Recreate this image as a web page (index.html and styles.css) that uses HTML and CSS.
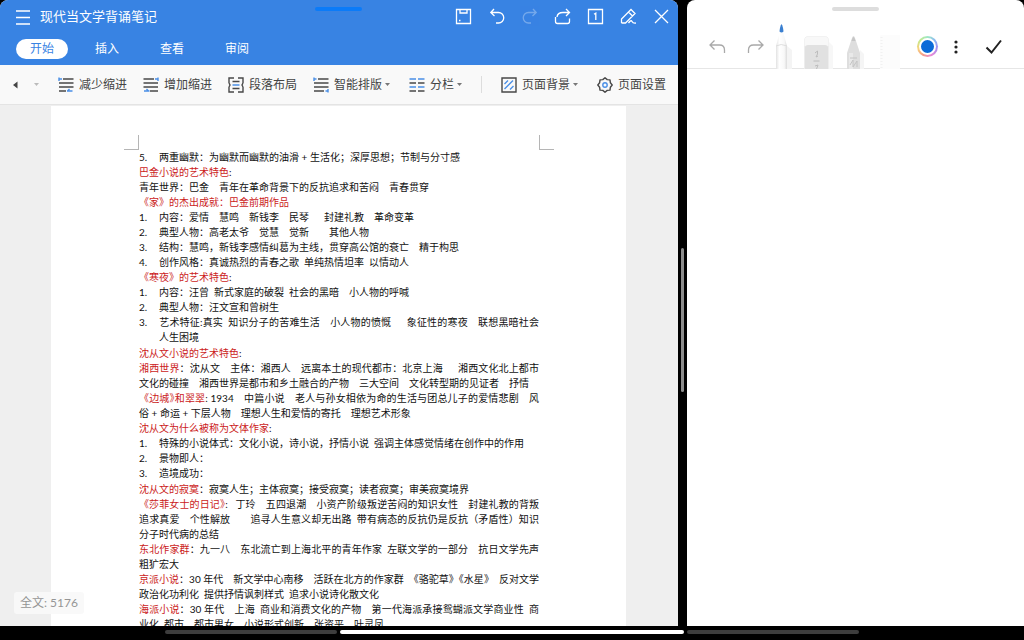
FILE: index.html
```html
<!DOCTYPE html>
<html lang="zh-CN">
<head>
<meta charset="utf-8">
<title>现代当文学背诵笔记</title>
<link rel="stylesheet" href="styles.css">
</head>
<body>
<div class="split">
  <main class="pane editor">
    <span class="grip grip-blue"></span>
    <header class="appbar">
      <div class="titlebar">
        <button class="icon-btn" aria-label="菜单"><svg width="16" height="16" viewBox="0 0 16 16"><path d="M1 2H15M1 8.500H15M1 15H15"/></svg></button>
        <h1 class="title">现代当文学背诵笔记</h1>
        <div class="actions">
          <button class="icon-btn" aria-label="保存"><svg width="17" height="17" viewBox="0 0 17 17"><path d="M1.500 1.500H15.500V15.500H1.500ZM5 1.500V5H12V1.500M4 12.500H5.500"/></svg></button>
          <button class="icon-btn" aria-label="撤销"><svg width="17" height="17" viewBox="0 0 17 17"><path d="M6 1L2.800 4.500L6.500 8M3 4.500H10.500A5 5 0 0 1 10.500 15H8"/></svg></button>
          <button class="icon-btn" aria-label="重做" disabled><svg width="17" height="17" viewBox="0 0 17 17"><path d="M12 1L15.200 4.500L11.500 8M15 4.500H7.500A5 5 0 0 0 7.500 15H10"/></svg></button>
          <button class="icon-btn" aria-label="分享"><svg width="17" height="17" viewBox="0 0 17 17"><path d="M12 1L15.500 4.500L12 8M15.500 4.500H9Q3.500 4.500 3 9M1.500 9V13.500Q1.500 15.500 3.500 15.500H13.500Q15.500 15.500 15.500 13.500V10.500"/></svg></button>
          <button class="icon-btn" aria-label="窗口"><svg width="17" height="17" viewBox="0 0 17 17"><path d="M1.500 1.500H15.500V15.500H1.500ZM7 6.300L8.800 5.200V12"/></svg></button>
          <button class="icon-btn" aria-label="编辑"><svg width="17" height="17" viewBox="0 0 17 17"><path d="M1.500 15V11L11 1.500L15 5.500L5.500 15H1.500M8.500 4L12.500 8M8.500 15Q11 11.500 12 13.500T16 15"/></svg></button>
          <button class="icon-btn" aria-label="关闭"><svg width="17" height="17" viewBox="0 0 17 17"><path d="M2 2L15 15M15 2L2 15"/></svg></button>
        </div>
      </div>
      <nav class="tabs">
        <button class="tab active">开始</button>
        <button class="tab">插入</button>
        <button class="tab">查看</button>
        <button class="tab">审阅</button>
      </nav>
    </header>
    <div class="ribbon">
      <div class="ribbon-start">
        <button class="scroll-btn" aria-label="向左"><svg width="6" height="8" viewBox="0 0 6 8"><path d="M5.500 .5V7.500L1 4Z" fill="#444"/></svg></button>
        <button class="scroll-btn" aria-label="更多"><svg width="5" height="3" viewBox="0 0 5 3"><path d="M0 0H5L2.500 3Z" fill="#bbb"/></svg></button>
      </div>
      <button class="tool"><svg class="tool-icon" width="16" height="16" viewBox="0 0 16 16"><path d="M5 2H15.500M1 6H15.500M1 10H15.500M1 14H8"/><path class="accent" d="M1 .5V4M1 2H4M9 14H14.500M11.500 12L9.500 14"/></svg>减少缩进</button>
      <button class="tool"><svg class="tool-icon" width="16" height="16" viewBox="0 0 16 16"><path d="M.5 2H11M.5 6H15M.5 10H15M7 14H15"/><path class="accent" d="M15 .5V4M12 2H15M1 14H6.500M3.500 12L5.500 14"/></svg>增加缩进</button>
      <button class="tool"><svg class="tool-icon" width="16" height="16" viewBox="0 0 16 16"><path d="M6 1H1V6M10 1H15V6M1 10V15H6M15 10V15H10M4.500 4.500H11.500M4.500 11.500H11.500M1 6L2 8L1 10M15 6L14 8L15 10"/><path class="accent" d="M4.500 8H11.500"/></svg>段落布局</button>
      <button class="tool menu"><svg class="tool-icon" width="16" height="16" viewBox="0 0 16 16"><path d="M5 2H15.500M1 6H15.500M1 10H15.500M1 14H11"/><path class="accent" d="M1 .5V4M1 2H3.500M15 12V15.500M12.500 14H15"/></svg>智能排版<svg class="caret" width="5" height="3" viewBox="0 0 5 3"><path d="M0 0H5L2.500 3Z"/></svg></button>
      <button class="tool menu"><svg class="tool-icon" width="16" height="16" viewBox="0 0 16 16"><path d="M.5 6H7M9 6H15.500M.5 14H7M9 14H15.500"/><path class="accent" d="M.5 2H7M9 2H15.500M.5 10H7M9 10H15.500"/></svg>分栏<svg class="caret" width="5" height="3" viewBox="0 0 5 3"><path d="M0 0H5L2.500 3Z"/></svg></button>
      <span class="divider"></span>
      <button class="tool menu"><svg class="tool-icon" width="16" height="16" viewBox="0 0 16 16"><path d="M1 1H15V15H1Z"/><path class="accent" d="M3.500 7L7 3.500M3.500 12L12 3.500M9 12.500L12.500 9"/></svg>页面背景<svg class="caret" width="5" height="3" viewBox="0 0 5 3"><path d="M0 0H5L2.500 3Z"/></svg></button>
      <button class="tool"><svg class="tool-icon" width="16" height="16" viewBox="0 0 16 16"><path d="M8 .8L10.200 2.600L13 2.900L13.400 5.800L15.200 8L13.400 10.200L13 13.100L10.200 13.400L8 15.200L5.800 13.400L3 13.100L2.600 10.200L.8 8L2.600 5.800L3 2.900L5.800 2.600Z" stroke-linejoin="round"/><circle class="accent" cx="8" cy="8" r="2.200"/></svg>页面设置</button>
    </div>
    <div class="canvas">
      <article class="page">
        <span class="crop crop-left"></span><span class="crop crop-right"></span>
        <section class="chapter">
          <ol class="list"><li><span class="num">5.</span>两重幽默：为幽默而幽默的油滑 + 生活化；深厚思想；节制与分寸感</li></ol>
          <p><b>巴金小说的艺术特色</b>:</p>
          <p>青年世界：巴金　青年在革命背景下的反抗追求和苦闷　青春贯穿</p>
          <p><b>《家》的杰出成就：巴金前期作品</b></p>
          <ol class="list">
            <li><span class="num">1.</span>内容：爱情　慧鸣　新钱李　民琴&ensp;　封建礼教　革命变革</li>
            <li><span class="num">2.</span>典型人物：高老太爷　觉慧　觉新　　其他人物</li>
            <li><span class="num">3.</span>结构：慧鸣，新钱李感情纠葛为主线，贯穿高公馆的衰亡　精于构思</li>
            <li><span class="num">4.</span>创作风格：真诚热烈的青春之歌&ensp;单纯热情坦率&ensp;以情动人</li>
          </ol>
          <p><b>《寒夜》的艺术特色</b>:</p>
          <ol class="list">
            <li><span class="num">1.</span>内容：汪曾&ensp;新式家庭的破裂&ensp;社会的黑暗　小人物的呼喊</li>
            <li><span class="num">2.</span>典型人物：汪文宣和曾树生</li>
            <li><span class="line"><span class="num">3.</span>艺术特征:真实&ensp;知识分子的苦难生活　小人物的愤慨&ensp;　象征性的寒夜　联想黑暗社会</span>人生困境</li>
          </ol>
        </section>
        <section class="chapter">
          <p><b>沈从文小说的艺术特色</b>:</p>
          <p><span class="line"><b>湘西世界</b>：沈从文　主体：湘西人　远离本土的现代都市：北京上海&ensp;　湘西文化北上都市</span>文化的碰撞　湘西世界是都市和乡土融合的产物　三大空间　文化转型期的见证者　抒情</p>
          <p><span class="line"><b>《边城<span class="half">》</span>和翠翠</b>: 1934　中篇小说　老人与孙女相依为命的生活与团总儿子的爱情悲剧　风</span>俗 + 命运 + 下层人物　理想人生和爱情的寄托　理想艺术形象</p>
          <p><b>沈从文为什么被称为文体作家</b>:</p>
          <ol class="list">
            <li><span class="num">1.</span>特殊的小说体式：文化小说，诗小说，抒情小说&ensp;强调主体感觉情绪在创作中的作用</li>
            <li><span class="num">2.</span>景物即人：</li>
            <li><span class="num">3.</span>造境成功：</li>
          </ol>
        </section>
        <section class="chapter">
          <p><b>沈从文的寂寞</b>：寂寞人生；主体寂寞；接受寂寞；读者寂寞；审美寂寞境界</p>
          <p><span class="line"><b>《莎菲女士的日记<span class="half">》</span></b>: &ensp;丁玲　五四退潮　小资产阶级叛逆苦闷的知识女性　封建礼教的背叛</span><span class="line">追求真爱　个性解放　　追寻人生意义却无出路&ensp;带有病态的反抗仍是反抗（矛盾性）知识</span>分子时代病的总结</p>
          <p><span class="line"><b>东北作家群</b>：九一八　东北流亡到上海北平的青年作家&ensp;左联文学的一部分　抗日文学先声</span>粗犷宏大</p>
          <p><span class="line"><b>京派小说</b>：30 年代　新文学中心南移　活跃在北方的作家群&ensp;《骆驼草》《水星》&ensp;反对文学</span>政治化功利化&ensp;提供抒情讽刺样式&ensp;追求小说诗化散文化</p>
          <p><span class="line"><b>海派小说</b>：30 年代　上海&ensp;商业和消费文化的产物　第一代海派承接鸳蝴派文学商业性&ensp;商</span>业化&ensp;都市　都市男女　小说形式创新　张资平　叶灵凤</p>
        </section>
      </article>
      <output class="count">全文: 5176</output>
    </div>
  </main>
  <div class="splitter"><span class="splitter-handle"></span></div>
  <aside class="pane notes">
    <span class="grip grip-gray"></span>
    <div class="pens">
      <div class="history">
        <button class="icon-btn" aria-label="撤销"><svg width="18" height="16" viewBox="0 0 18 16"><path d="M6.500 1.500L2 6L6.500 10.500M2 6H11.500Q16.500 6 16.500 11V14"/></svg></button>
        <button class="icon-btn" aria-label="重做"><svg width="18" height="16" viewBox="0 0 18 16"><path d="M11.500 1.500L16 6L11.500 10.500M16 6H6.500Q1.500 6 1.500 11V14"/></svg></button>
      </div>
      <div class="pen-set">
        <button class="pen" aria-label="铅笔"><svg width="20" height="45" viewBox="0 0 20 45"><defs><linearGradient id="body"><stop offset="0" stop-color="#e2e2e2"/><stop offset=".3" stop-color="#fff"/><stop offset=".75" stop-color="#f8f8f8"/><stop offset="1" stop-color="#dcdcdc"/></linearGradient></defs><path d="M11 22L16 26V45H11Z" fill="#f4f4f4"/><path d="M4 8H7L11 22V45H0V22Z" fill="url(#body)"/><path d="M0 22Q5 19 11 22" fill="none" stroke="#ddd"/><path d="M3.500 7.500Q4 2 5.500 0Q7 2 7.500 7.500Q5.500 9.500 3.500 7.500Z" fill="#3a7fd0"/></svg></button>
        <button class="pen" aria-label="橡皮"><svg width="30" height="45" viewBox="0 0 30 45"><path d="M25 18L29 22V45H25Z" fill="#f7f7f7"/><path d="M0 45V17Q0 12 5 12H20Q25 12 25 17V45Z" fill="#ededed"/><path d="M.5 22V17Q.5 12.500 5 12.500H20Q24.500 12.500 24.500 17V22Z" fill="#f8f8f8"/><path d="M1 45V24Q1 21 4 21H21Q24 21 24 24V45Z" fill="#e1e1e1"/><path d="M11 29L13.500 27V30L12 33L14 32M9.500 37H15.500M11 42L14 41L12.500 45" fill="none" stroke="#bcbcbc"/></svg></button>
        <button class="pen" aria-label="钢笔"><svg width="20" height="45" viewBox="0 0 20 45"><path d="M13 26L17 30V45H13Z" fill="#f5f5f5"/><path d="M0 45V29L5 14Q6.500 10 8 14L13 29V45Z" fill="#dedede"/><path d="M4.500 17Q6.500 9 8.500 17Z" fill="#c6c6c6"/><path d="M2 29H6V45H2Z" fill="#e9e9e9"/><path d="M3 34H10M3 41L6 36V43L10 37V43" fill="none" stroke="#c4c4c4"/></svg></button>
        <button class="pen" aria-label="尺子"><svg width="26" height="45" viewBox="0 0 26 45"><path d="M0 45V12Q0 11 1 11H20V45Z" fill="#fcfcfc"/><path d="M1.500 13V45" stroke="#f1f1f1" stroke-dasharray="1 2" stroke-width="2"/></svg></button>
      </div>
      <div class="options">
        <button class="color" aria-label="颜色"><span class="swatch"></span></button>
        <button class="icon-btn solid" aria-label="更多"><svg width="10" height="16" viewBox="0 0 10 16"><circle cx="5" cy="3" r="1.600"/><circle cx="5" cy="8" r="1.600"/><circle cx="5" cy="13" r="1.600"/></svg></button>
        <button class="icon-btn done" aria-label="完成"><svg width="18" height="16" viewBox="0 0 18 16"><path d="M1.500 8.500L6.500 13.500L16 1.500"/></svg></button>
      </div>
    </div>
  </aside>
</div>
<footer class="sysbar"><span class="bar"></span><span class="bar current"></span><span class="bar"></span></footer>
</body>
</html>
```
FILE: styles.css
```css
* { box-sizing: border-box; }

body {
  margin: 0;
  height: 100vh;
  display: flex;
  flex-direction: column;
  overflow: hidden;
  background: #000;
  font-family: Lato, "Noto Sans CJK SC", sans-serif;
}

button {
  border: 0;
  padding: 0;
  background: none;
  font: inherit;
  color: inherit;
}

svg { display: block; }

.split {
  flex: 1;
  min-height: 0;
  display: flex;
}

.pane {
  position: relative;
  min-width: 0;
  overflow: hidden;
  border-radius: 8px 8px 0 0;
  display: flex;
  flex-direction: column;
}

.editor { flex: 678 1 0; background: #efefef; }
.notes { flex: 337 1 0; background: #fff; }

.grip {
  position: absolute;
  top: 7px;
  left: 50%;
  width: 47px;
  height: 4px;
  margin-left: -24px;
  border-radius: 2px;
}
.grip-blue { background: #0b7bf8; }
.grip-gray { background: #ddd; }

.splitter {
  flex: none;
  width: 9px;
  display: flex;
  align-items: center;
  justify-content: center;
  padding-top: 14px;
}
.splitter-handle {
  width: 3px;
  height: 144px;
  border-radius: 2px;
  background: #8c8c8c;
}

/* App bar */
.appbar {
  height: 65px;
  background: #3883e3;
  color: #fff;
}
.titlebar {
  display: flex;
  align-items: center;
  height: 33px;
  padding: 0 8px 0 15px;
}
.title {
  flex: 1;
  margin: 0 0 2px 9px;
  font-size: 13px;
  line-height: 18px;
  font-weight: 400;
}
.actions { display: flex; gap: 16px; }

.icon-btn svg {
  fill: none;
  stroke: currentColor;
  stroke-width: 1.3;
}
.icon-btn:disabled { opacity: .3; }

.tabs {
  display: flex;
  gap: 13px;
  padding: 6px 16px 0;
}
.tab {
  width: 52px;
  height: 20px;
  border-radius: 10px;
  font-size: 12px;
  line-height: 20px;
}
.tab.active { background: #fff; color: #3883e3; }

/* Ribbon */
.ribbon {
  flex: none;
  display: flex;
  align-items: center;
  gap: 16px;
  height: 40px;
  overflow: hidden;
  background: #f9f9f9;
  border-bottom: 1px solid #e4e4e4;
  color: #444;
}
.ribbon-start {
  flex: none;
  display: flex;
  align-items: center;
  justify-content: space-between;
  width: 42px;
  padding: 0 3px 0 12px;
}
.tool {
  flex: none;
  display: flex;
  align-items: center;
  font-size: 12px;
  line-height: 18px;
}
.tool.menu { padding-right: 3px; }
.tool-icon {
  margin-right: 5px;
  fill: none;
  stroke: #484848;
  stroke-width: 1.4;
}
.tool-icon .accent { stroke: #4a8fe6; }
.caret { margin-left: 3px; fill: #777; }
.divider {
  width: 1px;
  height: 17px;
  margin-right: 3px;
  background: #ddd;
}

/* Document */
.canvas {
  position: relative;
  flex: 1;
  min-height: 0;
  overflow: hidden;
  padding: 1px 52px 0 51px;
}
.page {
  position: relative;
  min-height: 100%;
  padding: 44px 87px 0 88px;
  background: #fff;
  color: #111;
  font-size: 10px;
  line-height: 15px;
}
.crop {
  position: absolute;
  top: 29px;
  width: 15px;
  height: 15px;
  border-bottom: 1px solid #b5b5b5;
}
.crop-left { left: 73px; border-right: 1px solid #b5b5b5; }
.crop-right { right: 72px; border-left: 1px solid #b5b5b5; }

.chapter { margin-bottom: 1px; }
.page p { margin: 0; }
.page b { font-weight: 400; color: #cb1b1b; }
.list {
  margin: 0;
  padding: 0 0 0 20px;
  list-style: none;
}
.num {
  display: inline-block;
  width: 20px;
  margin-left: -20px;
  text-align: left;
  text-align-last: left;
}
.line {
  display: block;
  text-align: justify;
  text-align-last: justify;
}
.half { font-feature-settings: "halt"; }

.count {
  position: absolute;
  left: 14px;
  bottom: 12px;
  padding: 2px 6px;
  border-radius: 3px;
  background: rgba(248, 248, 248, .92);
  color: #959595;
  font-size: 12px;
  line-height: 18px;
}

/* Pen toolbar */
.pens {
  display: flex;
  justify-content: space-between;
  height: 69px;
  padding: 24px 21px 0;
  border-bottom: 1px solid #e6e6e6;
}
.history, .options {
  display: flex;
  align-items: center;
  height: 45px;
}
.history { gap: 21px; color: #a9a9a9; }
.options { gap: 13px; color: #222; }
.pen-set { display: flex; gap: 8px; }
.pen + .pen + .pen { margin-left: 5px; }
.icon-btn.solid svg { fill: currentColor; stroke: none; }
.done { margin-left: 11px; }
.done svg { stroke-width: 2; }
.color {
  width: 21px;
  height: 21px;
  padding: 2px;
  border-radius: 50%;
  background: conic-gradient(#9fe8c4, #8bb8f5, #a88df0, #e78bd8, #f59a8b, #f7d27a, #c5ea8d, #9fe8c4);
}
.swatch {
  display: block;
  height: 17px;
  border: 2px solid #fff;
  border-radius: 50%;
  background: #0b6bd8;
}

/* System bar */
.sysbar {
  flex: none;
  display: flex;
  align-items: center;
  justify-content: center;
  gap: 3px;
  height: 14px;
  padding-bottom: 2px;
}
.bar {
  width: 172px;
  height: 4px;
  border-radius: 2px;
  background: #3d3d3d;
}
.bar.current { width: 344px; background: #fff; }
```
